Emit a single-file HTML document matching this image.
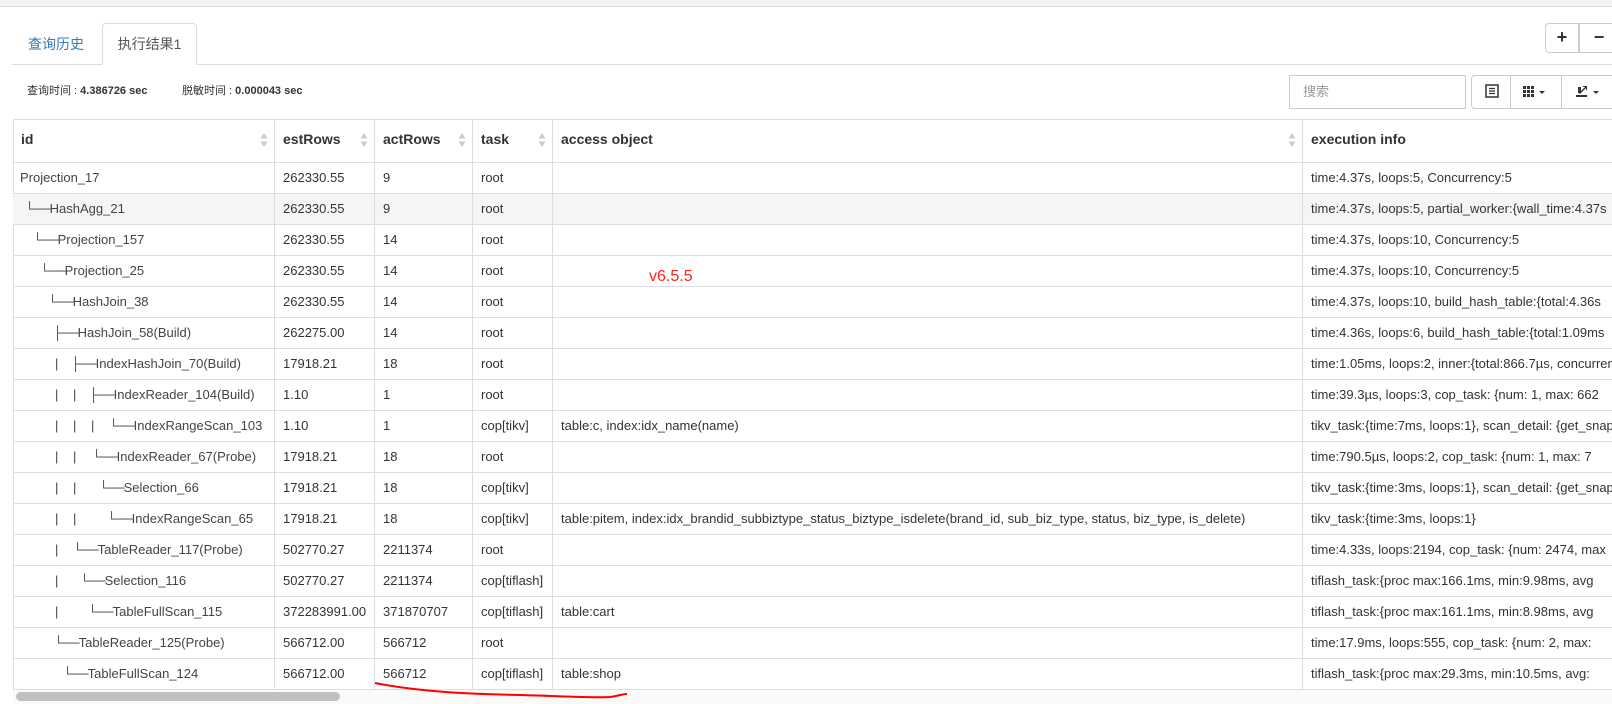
<!DOCTYPE html>
<html><head><meta charset="utf-8"><style>
*{box-sizing:border-box;margin:0;padding:0}
body{width:1612px;height:704px;overflow:hidden;background:#fff;font-family:"Liberation Sans","Noto Sans CJK SC",sans-serif;color:#333;position:relative;font-size:13px}
.a{position:absolute}
.top{left:0;top:0;width:1612px;height:7px;background:#f3f3f3;border-bottom:1px solid #ddd}
.tabline{left:12px;top:64px;width:1600px;border-top:1px solid #ddd}
.tab1{left:28px;top:34px;font-size:14px;color:#337ab7;line-height:20px}
.tab2{left:102px;top:23px;width:95px;height:42px;border:1px solid #ddd;border-bottom:1px solid #fff;border-radius:4px 4px 0 0;background:#fff;font-size:14px;line-height:40px;text-align:center;color:#555}
.info{top:84px;font-size:11px;line-height:14px;color:#333}
.btn{border:1px solid #ccc;background:#fff;text-align:center;font-weight:bold;font-size:18px;line-height:26px;color:#333}
.tbl{left:13px;top:119px;width:1610px;height:571px;border:1px solid #ddd;border-right:none}
.row{position:absolute;left:13px;width:1600px;height:31px;border-top:1px solid #ddd}
.c{position:absolute;top:0;height:31px;line-height:30px;white-space:nowrap;overflow:hidden;padding-left:8px;border-left:1px solid #ddd}
.c1{left:0;width:261px;border-left:none;padding-left:0}
.c2{left:261px;width:100px}
.c3{left:361px;width:98px}
.c4{left:459px;width:80px}
.c5{left:539px;width:750px}
.c6{left:1289px;width:320px;overflow:visible}
.hd{height:43px;line-height:40px;font-weight:bold;font-size:14px;top:0}
.s{position:absolute;top:0;color:#444}
.p{letter-spacing:-1px}
.sort{position:absolute;right:6px;top:14px;width:8px;height:14px}
</style></head><body>
<div class="a top"></div>
<div class="a tabline"></div>
<div class="a tab1">查询历史</div>
<div class="a tab2">执行结果1</div>
<div class="a info" style="left:27px">查询时间 : <b>4.386726 sec</b></div>
<div class="a info" style="left:182px">脱敏时间 : <b>0.000043 sec</b></div>
<div class="a btn" style="left:1545px;top:23px;width:34px;height:30px;border-radius:4px 0 0 4px">+</div>
<div class="a btn" style="left:1579px;top:23px;width:40px;height:30px">−</div>
<div class="a" style="left:1289px;top:75px;width:177px;height:34px;border:1px solid #ccc;font-size:13px;line-height:32px;padding-left:13px;color:#999">搜索</div>
<div class="a" style="left:1471px;top:75px;width:150px;height:34px;border:1px solid #ccc;border-radius:4px"></div>
<div class="a" style="left:1510px;top:75px;height:34px;border-left:1px solid #ccc"></div>
<div class="a" style="left:1561px;top:75px;height:34px;border-left:1px solid #ccc"></div>
<svg class="a" style="left:1485px;top:84px" width="14" height="14"><rect x="1" y="1" width="12" height="12" fill="none" stroke="#333" stroke-width="1.5"/><path d="M4 4.5h6M4 7h6M4 9.5h6" stroke="#333" stroke-width="1.2"/></svg>
<svg class="a" style="left:1522px;top:84px" width="28" height="14"><g fill="#333"><rect x="1" y="2" width="3" height="3"/><rect x="5" y="2" width="3" height="3"/><rect x="9" y="2" width="3" height="3"/><rect x="1" y="6" width="3" height="3"/><rect x="5" y="6" width="3" height="3"/><rect x="9" y="6" width="3" height="3"/><rect x="1" y="10" width="3" height="3"/><rect x="5" y="10" width="3" height="3"/><rect x="9" y="10" width="3" height="3"/><path d="M17 7h6l-3 3z"/></g></svg>
<svg class="a" style="left:1573px;top:83px" width="30" height="16"><g fill="#333"><path d="M3 12h11v2H3z"/><path d="M6 10l6-6-2 0 0-1h4v4h-1V5L7 11z"/><path d="M5 4h3v6H5z"/><path d="M20 8h6l-3 3z"/></g></svg>
<div class="a tbl"></div>
<div class="row" style="top:119px;height:43px;border-top:none">
<div class="c c1 hd" style="padding-left:8px">id<svg class="sort" viewBox="0 0 8 14"><path d="M4 0l3.5 5.5h-7zM4 14l3.5-5.5h-7z" fill="#ccc"/></svg></div>
<div class="c c2 hd">estRows<svg class="sort" viewBox="0 0 8 14"><path d="M4 0l3.5 5.5h-7zM4 14l3.5-5.5h-7z" fill="#ccc"/></svg></div>
<div class="c c3 hd">actRows<svg class="sort" viewBox="0 0 8 14"><path d="M4 0l3.5 5.5h-7zM4 14l3.5-5.5h-7z" fill="#ccc"/></svg></div>
<div class="c c4 hd">task<svg class="sort" viewBox="0 0 8 14"><path d="M4 0l3.5 5.5h-7zM4 14l3.5-5.5h-7z" fill="#ccc"/></svg></div>
<div class="c c5 hd">access object<svg class="sort" viewBox="0 0 8 14"><path d="M4 0l3.5 5.5h-7zM4 14l3.5-5.5h-7z" fill="#ccc"/></svg></div>
<div class="c c6 hd">execution info</div>
</div>

<div class="row" style="top:162px"><div class="c c1"><span class="s" style="left:7px">Projection_17</span></div><div class="c c2">262330.55</div><div class="c c3">9</div><div class="c c4">root</div><div class="c c5"></div><div class="c c6">time:4.37s, loops:5, Concurrency:5</div></div>
<div class="row" style="top:193px;background:#f5f5f5"><div class="c c1"><span class="s" style="left:12px"><span class="p">└──</span>HashAgg_21</span></div><div class="c c2">262330.55</div><div class="c c3">9</div><div class="c c4">root</div><div class="c c5"></div><div class="c c6">time:4.37s, loops:5, partial_worker:{wall_time:4.37s</div></div>
<div class="row" style="top:224px"><div class="c c1"><span class="s" style="left:20px"><span class="p">└──</span>Projection_157</span></div><div class="c c2">262330.55</div><div class="c c3">14</div><div class="c c4">root</div><div class="c c5"></div><div class="c c6">time:4.37s, loops:10, Concurrency:5</div></div>
<div class="row" style="top:255px"><div class="c c1"><span class="s" style="left:27px"><span class="p">└──</span>Projection_25</span></div><div class="c c2">262330.55</div><div class="c c3">14</div><div class="c c4">root</div><div class="c c5"></div><div class="c c6">time:4.37s, loops:10, Concurrency:5</div></div>
<div class="row" style="top:286px"><div class="c c1"><span class="s" style="left:35px"><span class="p">└──</span>HashJoin_38</span></div><div class="c c2">262330.55</div><div class="c c3">14</div><div class="c c4">root</div><div class="c c5"></div><div class="c c6">time:4.37s, loops:10, build_hash_table:{total:4.36s</div></div>
<div class="row" style="top:317px"><div class="c c1"><span class="s" style="left:40px"><span class="p">├──</span>HashJoin_58(Build)</span></div><div class="c c2">262275.00</div><div class="c c3">14</div><div class="c c4">root</div><div class="c c5"></div><div class="c c6">time:4.36s, loops:6, build_hash_table:{total:1.09ms</div></div>
<div class="row" style="top:348px"><div class="c c1"><span class="s" style="left:42px">|</span><span class="s" style="left:58px"><span class="p">├──</span>IndexHashJoin_70(Build)</span></div><div class="c c2">17918.21</div><div class="c c3">18</div><div class="c c4">root</div><div class="c c5"></div><div class="c c6">time:1.05ms, loops:2, inner:{total:866.7µs, concurrency</div></div>
<div class="row" style="top:379px"><div class="c c1"><span class="s" style="left:42px">|</span><span class="s" style="left:60px">|</span><span class="s" style="left:76px"><span class="p">├──</span>IndexReader_104(Build)</span></div><div class="c c2">1.10</div><div class="c c3">1</div><div class="c c4">root</div><div class="c c5"></div><div class="c c6">time:39.3µs, loops:3, cop_task: {num: 1, max: 662</div></div>
<div class="row" style="top:410px"><div class="c c1"><span class="s" style="left:42px">|</span><span class="s" style="left:60px">|</span><span class="s" style="left:78px">|</span><span class="s" style="left:96px"><span class="p">└──</span>IndexRangeScan_103</span></div><div class="c c2">1.10</div><div class="c c3">1</div><div class="c c4">cop[tikv]</div><div class="c c5">table:c, index:idx_name(name)</div><div class="c c6">tikv_task:{time:7ms, loops:1}, scan_detail: {get_snap</div></div>
<div class="row" style="top:441px"><div class="c c1"><span class="s" style="left:42px">|</span><span class="s" style="left:60px">|</span><span class="s" style="left:79px"><span class="p">└──</span>IndexReader_67(Probe)</span></div><div class="c c2">17918.21</div><div class="c c3">18</div><div class="c c4">root</div><div class="c c5"></div><div class="c c6">time:790.5µs, loops:2, cop_task: {num: 1, max: 7</div></div>
<div class="row" style="top:472px"><div class="c c1"><span class="s" style="left:42px">|</span><span class="s" style="left:60px">|</span><span class="s" style="left:86px"><span class="p">└──</span>Selection_66</span></div><div class="c c2">17918.21</div><div class="c c3">18</div><div class="c c4">cop[tikv]</div><div class="c c5"></div><div class="c c6">tikv_task:{time:3ms, loops:1}, scan_detail: {get_snap</div></div>
<div class="row" style="top:503px"><div class="c c1"><span class="s" style="left:42px">|</span><span class="s" style="left:60px">|</span><span class="s" style="left:94px"><span class="p">└──</span>IndexRangeScan_65</span></div><div class="c c2">17918.21</div><div class="c c3">18</div><div class="c c4">cop[tikv]</div><div class="c c5">table:pitem, index:idx_brandid_subbiztype_status_biztype_isdelete(brand_id, sub_biz_type, status, biz_type, is_delete)</div><div class="c c6">tikv_task:{time:3ms, loops:1}</div></div>
<div class="row" style="top:534px"><div class="c c1"><span class="s" style="left:42px">|</span><span class="s" style="left:60px"><span class="p">└──</span>TableReader_117(Probe)</span></div><div class="c c2">502770.27</div><div class="c c3">2211374</div><div class="c c4">root</div><div class="c c5"></div><div class="c c6">time:4.33s, loops:2194, cop_task: {num: 2474, max</div></div>
<div class="row" style="top:565px"><div class="c c1"><span class="s" style="left:42px">|</span><span class="s" style="left:67px"><span class="p">└──</span>Selection_116</span></div><div class="c c2">502770.27</div><div class="c c3">2211374</div><div class="c c4">cop[tiflash]</div><div class="c c5"></div><div class="c c6">tiflash_task:{proc max:166.1ms, min:9.98ms, avg</div></div>
<div class="row" style="top:596px"><div class="c c1"><span class="s" style="left:42px">|</span><span class="s" style="left:75px"><span class="p">└──</span>TableFullScan_115</span></div><div class="c c2">372283991.00</div><div class="c c3">371870707</div><div class="c c4">cop[tiflash]</div><div class="c c5">table:cart</div><div class="c c6">tiflash_task:{proc max:161.1ms, min:8.98ms, avg</div></div>
<div class="row" style="top:627px"><div class="c c1"><span class="s" style="left:41px"><span class="p">└──</span>TableReader_125(Probe)</span></div><div class="c c2">566712.00</div><div class="c c3">566712</div><div class="c c4">root</div><div class="c c5"></div><div class="c c6">time:17.9ms, loops:555, cop_task: {num: 2, max:</div></div>
<div class="row" style="top:658px"><div class="c c1"><span class="s" style="left:50px"><span class="p">└──</span>TableFullScan_124</span></div><div class="c c2">566712.00</div><div class="c c3">566712</div><div class="c c4">cop[tiflash]</div><div class="c c5">table:shop</div><div class="c c6">tiflash_task:{proc max:29.3ms, min:10.5ms, avg:</div></div>
<div class="a" style="left:13px;top:689px;width:1600px;height:15px;background:#fafafa;border-top:1px solid #ddd"></div>
<div class="a" style="left:16px;top:692px;width:324px;height:9px;background:#c1c1c1;border-radius:5px"></div>
<div class="a" style="left:649px;top:268px;color:#f22;font-size:16px">v6.5.5</div>
<svg class="a" style="left:0;top:0" width="1612" height="704"><path d="M375 683 C420 692 470 694 520 695 C560 696 590 698 610 697 C618 696 622 694 627 694" fill="none" stroke="#f00" stroke-width="2"/></svg>
</body></html>
